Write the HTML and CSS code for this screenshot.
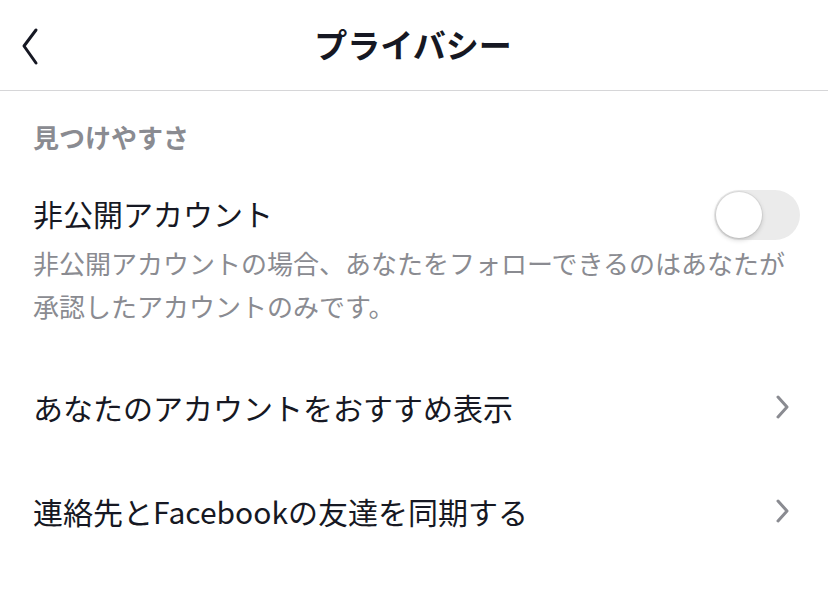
FILE: index.html
```html
<!DOCTYPE html>
<html lang="ja">
<head>
    <meta charset="UTF-8">
    <meta name="viewport" content="width=device-width, initial-scale=1.0">
    <title>プライバシー</title>
    <link rel="stylesheet" href="styles.css">
</head>
<body>

    <header class="topbar">
        <a class="back" href="#">
            <svg width="20" height="40" viewBox="0 0 20 40">
                <polyline points="15,3 3,19 15,36" fill="none" stroke="#161823" stroke-width="3" stroke-linecap="round" stroke-linejoin="round"/>
            </svg>
        </a>
        <h1>プライバシー</h1>
    </header>

    <div class="section">
        <div class="section-label">見つけやすさ</div>

        <div class="setting">
            <div class="setting-row">
                <span class="setting-title">非公開アカウント</span>
                <span class="toggle"><span class="knob"></span></span>
            </div>
            <p class="setting-desc">非公開アカウントの場合、あなたをフォローできるのはあなたが<br>承認したアカウントのみです。</p>
        </div>

        <a class="link-row" href="#">
            <span class="setting-title">あなたのアカウントをおすすめ表示</span>
            <svg class="chev" width="14" height="24" viewBox="0 0 14 24">
                <polyline points="2,2 11,12 2,22" fill="none" stroke="#8a8b91" stroke-width="3" stroke-linecap="round" stroke-linejoin="round"/>
            </svg>
        </a>

        <a class="link-row" href="#">
            <span class="setting-title">連絡先とFacebookの友達を同期する</span>
            <svg class="chev" width="14" height="24" viewBox="0 0 14 24">
                <polyline points="2,2 11,12 2,22" fill="none" stroke="#8a8b91" stroke-width="3" stroke-linecap="round" stroke-linejoin="round"/>
            </svg>
        </a>
    </div>

</body>
</html>
```

FILE: styles.css
```css
body {
    margin: 0;
    padding: 0;
    background-color: #fff;
    color: #161823;
    font-family: "Noto Sans CJK JP", "Noto Sans", sans-serif;
}
.topbar {
    height: 90px;
    border-bottom: 1px solid #d6d6d8;
    display: flex;
    align-items: center;
    justify-content: center;
    position: relative;
}
.topbar h1 {
    margin: 0;
    font-size: 33px;
    font-weight: 700;
    padding-bottom: 2px;
    padding-right: 2px;
}
.back {
    position: absolute;
    left: 21px;
    top: 27px;
    display: block;
    line-height: 0;
}
.section {
    padding: 28px 28px 0 33px;
}
.section-label {
    font-size: 26px;
    font-weight: 700;
    line-height: 36px;
    color: #8a8b91;
}
.setting {
    margin-top: 38px;
}
.setting-row {
    display: flex;
    align-items: center;
    justify-content: space-between;
    height: 40px;
}
.setting-title {
    font-size: 30px;
    line-height: 40px;
}
.toggle {
    width: 86px;
    height: 50px;
    border-radius: 25px;
    background-color: #ebebeb;
    margin-top: 4px;
    display: flex;
    align-items: center;
    padding: 0 2px;
    box-sizing: border-box;
}
.knob {
    width: 46px;
    height: 46px;
    border-radius: 50%;
    background-color: #fff;
    box-shadow: 0 2px 5px rgba(0,0,0,0.18), 0 0 0 1px rgba(0,0,0,0.05);
}
.setting-desc {
    margin: 8px 0 0;
    font-size: 26px;
    line-height: 43px;
    color: #8a8b91;
    white-space: nowrap;
}
.link-row {
    display: flex;
    align-items: center;
    justify-content: space-between;
    height: 104px;
    color: #161823;
    text-decoration: none;
}
.setting + .link-row {
    margin-top: 28px;
}
.chev {
    margin-right: 10px;
}
```
